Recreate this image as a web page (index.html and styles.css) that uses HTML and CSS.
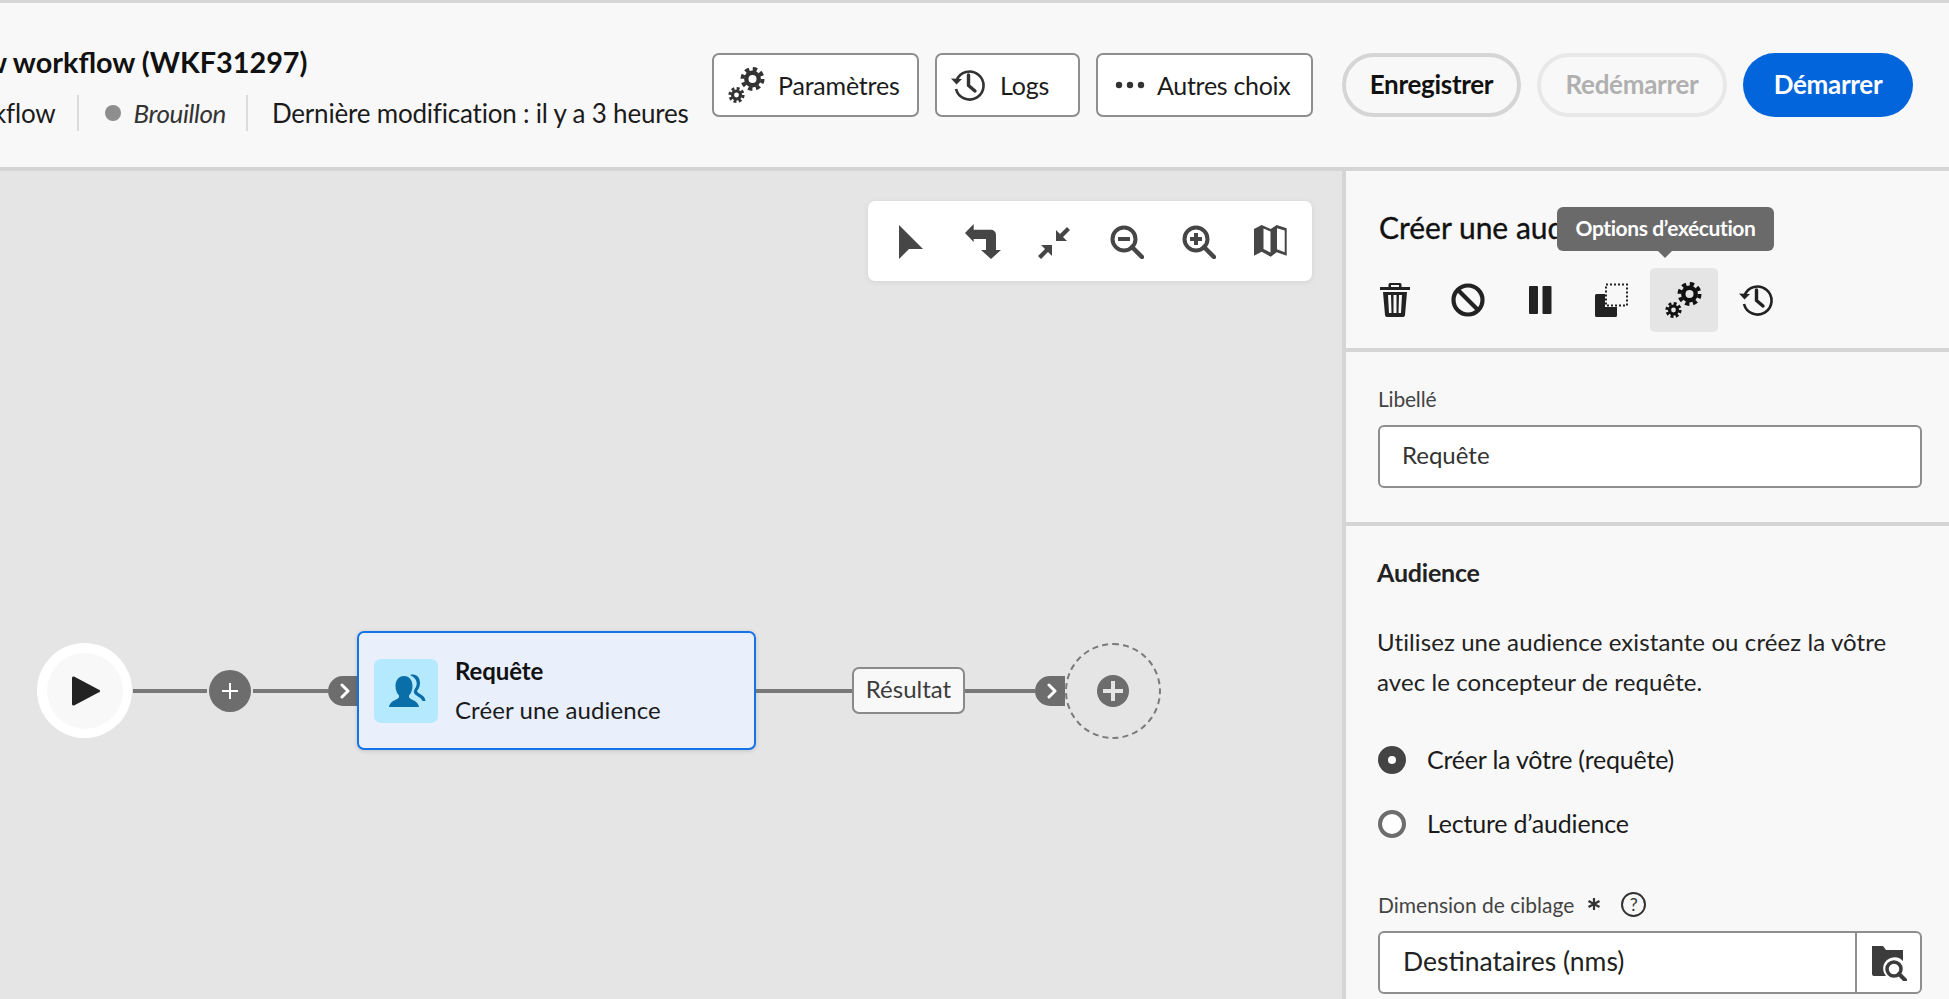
FILE: index.html
```html
<!DOCTYPE html>
<html lang="fr">
<head>
<meta charset="utf-8">
<title>Workflow</title>
<link rel="stylesheet" href="styles.css">
</head>
<body>
<header class="topbar">
  <div class="headings">
    <h1 class="wf-title">New workflow (WKF31297)</h1>
    <div class="wf-meta">
      <span class="meta-type">Workflow</span>
      <span class="meta-status"><i class="status-dot"></i><em>Brouillon</em></span>
      <span class="meta-date">Dernière modification : il y a 3 heures</span>
    </div>
  </div>
  <div class="actions">
    <button class="btn-outline btn-params">
      <svg class="ico-gears" width="38" height="38" viewBox="0 0 38 38"><use href="#gears"/></svg>
      Paramètres
    </button>
    <button class="btn-outline btn-logs">
      <svg width="36" height="36" viewBox="0 0 36 36"><use href="#history"/></svg>
      Logs
    </button>
    <button class="btn-outline btn-more">
      <svg width="32" height="8" viewBox="0 0 32 8"><circle cx="4" cy="4" r="3.2"/><circle cx="15" cy="4" r="3.2"/><circle cx="26" cy="4" r="3.2"/></svg>
      Autres choix
    </button>
    <button class="pill pill-save">Enregistrer</button>
    <button class="pill pill-restart">Redémarrer</button>
    <button class="pill pill-start">Démarrer</button>
  </div>
</header>

<svg class="defs" width="0" height="0">
  <defs>
    <g id="gears">
      <circle cx="24.5" cy="13" r="6.2" fill="none" stroke="currentColor" stroke-width="4.4"/>
      <circle cx="24.5" cy="13" r="10" fill="none" stroke="currentColor" stroke-width="4" stroke-dasharray="4.3 3.55"/>
      <circle cx="8.5" cy="29" r="4" fill="none" stroke="currentColor" stroke-width="3.2"/>
      <circle cx="8.5" cy="29" r="6.6" fill="none" stroke="currentColor" stroke-width="3" stroke-dasharray="2.9 2.28"/>
    </g>
    <g id="history">
      <path d="M6.5 13.5A14 14 0 1 1 6 22" fill="none" stroke="currentColor" stroke-width="2.6"/>
      <path d="M1 11.5l5.5 6 5.5-5.5z" fill="currentColor"/>
      <path d="M18.5 8v10.5l6.5 5.5" fill="none" stroke="currentColor" stroke-width="3.4" stroke-linecap="round" stroke-linejoin="round"/>
    </g>
  </defs>
</svg>

<main class="workspace">
  <section class="canvas">
    <div class="view-tools">
      <span class="tool"><svg width="26" height="36" viewBox="0 0 26 36"><path d="M1 1l24 24H11L1 35z"/></svg></span>
      <span class="tool"><svg width="36" height="36" viewBox="0 0 36 36"><path d="M0 9L8.7 0V5.7H26a5 5 0 0 1 5 5V26H36L26 35 16 26H21V15H8.7V18z"/></svg></span>
      <span class="tool"><svg width="34" height="34" viewBox="0 0 34 34"><path d="M29 2l3 3-7 7 4 4H18V5l4 4zM14 20V31l-4-4-7 7-3-3 7-7-4-4z"/></svg></span>
      <span class="tool"><svg width="34" height="34" viewBox="0 0 34 34"><circle cx="14" cy="14" r="11.5" fill="none" stroke="currentColor" stroke-width="4"/><path d="M22 22l10 10" stroke="currentColor" stroke-width="4.5" stroke-linecap="round"/><rect x="8" y="12" width="12" height="4"/></svg></span>
      <span class="tool"><svg width="34" height="34" viewBox="0 0 34 34"><circle cx="14" cy="14" r="11.5" fill="none" stroke="currentColor" stroke-width="4"/><path d="M22 22l10 10" stroke="currentColor" stroke-width="4.5" stroke-linecap="round"/><path d="M8 12h4V8h4v4h4v4h-4v4h-4v-4H8z"/></svg></span>
      <span class="tool"><svg width="34" height="34" viewBox="0 0 34 34"><path d="M0 4L7.7 0l9 4 6-4 10 3.3V30.7L22.7 27.3l-6 4.4-9-5L0 30.7zM9.5 3.5v20.500l7 3.500V6.500zM23 3.200v21l7.700 3V5.400z" fill-rule="evenodd"/></svg></span>
    </div>
    <div class="flow">
      <div class="start-node"><span class="start-inner"><svg width="28" height="30" viewBox="0 0 28 30"><path d="M2 0.5L26.5 13.5a1.5 1.5 0 0 1 0 3L2 29.5a1.5 1.5 0 0 1-2-1.5V2a1.5 1.5 0 0 1 2-1.5z"/></svg></span></div>
      <span class="link link-a"></span>
      <span class="plus-dot"><svg width="18" height="18" viewBox="0 0 18 18"><path d="M8 1h2v7h7v2h-7v7H8v-7H1V8h7z"/></svg></span>
      <span class="link link-b"></span>
      <span class="tab"><svg width="10" height="16" viewBox="0 0 10 16"><path d="M2 2l6 6-6 6" fill="none" stroke="currentColor" stroke-width="3" stroke-linecap="round" stroke-linejoin="round"/></svg></span>
      <article class="activity">
        <span class="activity-icon"><svg width="64" height="64" viewBox="0 0 64 64"><path d="M30 17c5.5 0 8.5 4.5 8.5 10 0 4-1.5 7.5-3.5 9.5v2c2 2.5 9 3 10 9.5H15c1-6.5 8-7 10-9.5v-2c-2-2-3.5-5.5-3.5-9.5 0-5.5 3-10 8.5-10z"/><path d="M36 16c1-.5 2-.5 3-.5 4.5 0 7 4 7 8.5 0 3.5-1.5 6.5-3 8 .5 3 8 3.5 8.500 10h-3c-1.5-4-7-5-8.500-8-.5-1.5 0-3 1-4.500 3-4 2.500-10-5-13.500z"/></svg></span>
        <div class="activity-text">
          <strong>Requête</strong>
          <span>Créer une audience</span>
        </div>
      </article>
      <span class="link link-c"></span>
      <span class="result">Résultat</span>
      <span class="link link-d"></span>
      <span class="tab tab-end"><svg width="10" height="16" viewBox="0 0 10 16"><path d="M2 2l6 6-6 6" fill="none" stroke="currentColor" stroke-width="3" stroke-linecap="round" stroke-linejoin="round"/></svg></span>
      <span class="drop"><span class="drop-plus"><svg width="22" height="22" viewBox="0 0 22 22"><path d="M9 1h4v8h8v4h-8v8H9v-8H1V9h8z"/></svg></span></span>
    </div>
  </section>

  <aside class="panel">
    <div class="panel-head">
      <h2 class="panel-title">Créer une audience</h2>
      <div class="icon-row">
        <button class="icon-btn icon-trash"><svg width="30" height="34" viewBox="0 0 30 34"><path d="M10 0h10a1.5 1.5 0 0 1 1.5 1.5V4H30v3H0V4h8.500V1.500A1.500 1.500 0 0 1 10 0zm1 2v2h8V2zM3 9h24l-2 23a2 2 0 0 1-2 2H7a2 2 0 0 1-2-2zm5 3l1 18h2.500L11 12zm5.500 0v18h3V12zm5.500 0l-.5 18H21l1-18z" fill-rule="evenodd"/></svg></button>
        <button class="icon-btn"><svg width="34" height="34" viewBox="0 0 34 34"><circle cx="17" cy="17" r="14.5" fill="none" stroke="currentColor" stroke-width="4.2"/><path d="M7 7l20 20" stroke="currentColor" stroke-width="4.2"/></svg></button>
        <button class="icon-btn"><svg width="24" height="30" viewBox="0 0 24 30"><rect x="1" y="1" width="9" height="28" rx="1"/><rect x="14.5" y="1" width="9" height="28" rx="1"/></svg></button>
        <button class="icon-btn"><svg width="34" height="34" viewBox="0 0 34 34"><path d="M0 12.500a1.500 1.500 0 0 1 1.500-1.500H10v13h12v8.500a1.500 1.500 0 0 1-1.500 1.500h-19A1.500 1.500 0 0 1 0 32.500z"/><rect x="11" y="1.500" width="21" height="21" fill="none" stroke="currentColor" stroke-width="2" stroke-dasharray="2 2"/></svg></button>
        <button class="icon-btn is-active"><svg width="38" height="38" viewBox="0 0 38 38"><use href="#gears"/></svg>
          <span class="tooltip">Options d’exécution</span>
        </button>
        <button class="icon-btn"><svg width="36" height="36" viewBox="0 0 36 36"><use href="#history"/></svg></button>
      </div>
    </div>
    <div class="panel-section section-label">
      <label class="field-label">Libellé</label>
      <div class="text-input">Requête</div>
    </div>
    <div class="panel-section section-audience">
      <h3 class="section-title">Audience</h3>
      <p class="section-copy">Utilisez une audience existante ou créez la vôtre<br>avec le concepteur de requête.</p>
      <div class="radio-row"><i class="radio is-on"></i><span>Créer la vôtre (requête)</span></div>
      <div class="radio-row"><i class="radio"></i><span>Lecture d’audience</span></div>
      <div class="dim-label">
        <span>Dimension de ciblage</span>
        <svg class="ico-star" width="14" height="14" viewBox="0 0 14 14"><path d="M7 1v12M1.500 4l11 6M12.500 4l-11 6" stroke="currentColor" stroke-width="2.200" fill="none"/></svg>
        <span class="help">?</span>
      </div>
      <div class="picker">
        <span class="picker-value">Destinataires (nms)</span>
        <span class="picker-btn"><svg width="36" height="36" viewBox="0 0 36 36"><path d="M1 1h11l3 4h17v11a11 11 0 0 0-17 15H3a2 2 0 0 1-2-2z"/><circle cx="23" cy="24" r="7" fill="none" stroke="currentColor" stroke-width="3.500"/><path d="M28 29l6 6" stroke="currentColor" stroke-width="4" stroke-linecap="round"/></svg></span>
      </div>
    </div>
  </aside>
</main>
</body>
</html>
```

FILE: styles.css
```css
* { box-sizing: border-box; }
html, body { margin: 0; padding: 0; }
body {
  width: 1949px;
  height: 999px;
  overflow: hidden;
  background: #e5e5e5;
  color: #1b1b1b;
  font-family: Lato, "Liberation Sans", sans-serif;
  font-size: 24px;
  display: flex;
  flex-direction: column;
}
.defs { position: absolute; }
button { font-family: inherit; cursor: pointer; }

/* top bar */
.topbar {
  flex: none;
  height: 171px;
  background: #f8f8f8;
  border-top: 3px solid #d5d5d5;
  border-bottom: 4px solid #d5d5d5;
  display: flex;
  align-items: flex-start;
  overflow: hidden;
}
.headings {
  flex: none;
  width: 745px;
  margin-left: -53px;
  padding-top: 40px;
}
.wf-title {
  margin: 0;
  font-size: 28.8px;
  font-weight: 700;
  line-height: 38px;
  color: #111;
  white-space: nowrap;
}
.wf-meta {
  display: flex;
  align-items: center;
  margin-top: 14px;
  height: 36px;
  font-size: 26px;
  letter-spacing: -0.2px;
}
.meta-type { margin-left: -3px; padding-right: 21px; border-right: 2px solid #dcdcdc; line-height: 36px; }
.meta-status {
  display: flex;
  align-items: center;
  padding: 0 20px 0 26px;
  border-right: 2px solid #dcdcdc;
  line-height: 36px;
  color: #333;
  letter-spacing: -0.4px;
}
.status-dot { width: 16px; height: 16px; border-radius: 50%; background: #8e8e8e; margin-right: 13px; }
.meta-date { padding-left: 24px; white-space: nowrap; }

.actions {
  flex: none;
  display: flex;
  align-items: center;
  margin-top: 50px;
  margin-left: 20px;
}
.btn-outline {
  height: 64px;
  display: flex;
  align-items: center;
  background: #fff;
  border: 2px solid #8e8e8e;
  border-radius: 7px;
  color: #1b1b1b;
  font-size: 25px;
  letter-spacing: -0.2px;
  padding: 0;
  white-space: nowrap;
}
.btn-params { width: 207px; padding-left: 14px; gap: 12px; margin-right: 16px; }
.btn-logs { width: 145px; padding-left: 13px; gap: 14px; margin-right: 16px; }
.btn-more { width: 217px; padding-left: 17px; gap: 10px; margin-right: 29px; letter-spacing: -0.3px; }
.btn-outline svg { fill: #333; color: #333; flex: none; }
.pill {
  height: 64px;
  border-radius: 32px;
  font-size: 26px;
  font-weight: 700;
  letter-spacing: -0.3px;
  padding: 0 0 3px;
  margin-right: 16px;
  background: transparent;
}
.pill-save { width: 179px; border: 4px solid #d5d5d5; color: #111; }
.pill-restart { width: 190px; border: 4px solid #e8e8e8; color: #b0b0b0; }
.pill-start { width: 170px; border: 0; background: #0265dc; color: #fff; }

/* workspace */
.workspace { flex: 1; display: flex; min-height: 0; }
.canvas {
  flex: none;
  width: 1342px;
  display: flex;
  flex-direction: column;
  background: #e5e5e5;
}
.view-tools {
  align-self: flex-end;
  margin: 30px 30px 0 0;
  width: 444px;
  height: 80px;
  padding: 2px 5px 0 7px;
  display: grid;
  grid-template-columns: repeat(6, 72px);
  align-items: center;
  justify-items: center;
  background: #fff;
  border-radius: 7px;
  box-shadow: 0 1px 6px rgba(0, 0, 0, 0.08);
  color: #464646;
  fill: #464646;
}
.tool { display: flex; }

.flow {
  margin-top: 350px;
  padding-left: 37px;
  display: flex;
  align-items: center;
}
.start-node {
  flex: none;
  width: 95px;
  height: 95px;
  border-radius: 50%;
  background: #fff;
  display: flex;
  align-items: center;
  justify-content: center;
}
.start-inner {
  width: 76px;
  height: 76px;
  border-radius: 50%;
  background: #f8f8f8;
  display: flex;
  align-items: center;
  justify-content: center;
  padding-left: 3px;
  fill: #222;
}
.link { flex: none; height: 4px; background: #787878; }
.link-a { width: 74px; margin-left: 1px; }
.plus-dot {
  flex: none;
  width: 42px;
  height: 42px;
  margin: 0 2px;
  border-radius: 50%;
  background: #6d6d6d;
  display: flex;
  align-items: center;
  justify-content: center;
  fill: #fff;
}
.link-b { width: 75px; }
.tab {
  flex: none;
  width: 29px;
  height: 30px;
  border-radius: 15px 0 0 15px;
  background: #6d6d6d;
  color: #fff;
  display: flex;
  align-items: center;
  justify-content: center;
  padding-left: 4px;
}
.activity {
  flex: none;
  width: 399px;
  height: 119px;
  display: flex;
  align-items: center;
  gap: 17px;
  padding-left: 15px;
  background: #e9f0fc;
  border: 2px solid #1473e6;
  border-radius: 7px;
  box-shadow: 0 1px 4px rgba(0, 0, 0, 0.15);
}
.activity-icon {
  flex: none;
  width: 64px;
  height: 64px;
  border-radius: 7px;
  background: #b5e9fd;
  display: flex;
  align-items: center;
  justify-content: center;
  fill: #0a6ea8;
}
.activity-text { display: flex; flex-direction: column; gap: 9px; line-height: 30px; letter-spacing: 0.1px; white-space: nowrap; }
.activity-text strong { font-weight: 700; color: #111; letter-spacing: -0.1px; }
.link-c { width: 96px; }
.result {
  flex: none;
  width: 113px;
  height: 47px;
  padding-bottom: 4px;
  display: flex;
  align-items: center;
  justify-content: center;
  background: #f8f8f8;
  border: 2px solid #8a8a8a;
  border-radius: 7px;
  color: #3c3c3c;
}
.link-d { width: 70px; }
.tab-end { width: 30px; }
.drop {
  flex: none;
  width: 96px;
  height: 96px;
  border-radius: 50%;
  border: 2px dashed #7a7a7a;
  display: flex;
  align-items: center;
  justify-content: center;
}
.drop-plus {
  width: 32px;
  height: 32px;
  border-radius: 50%;
  background: #6d6d6d;
  display: flex;
  align-items: center;
  justify-content: center;
  fill: #e5e5e5;
}

/* right panel */
.panel {
  flex: 1;
  min-width: 0;
  background: #f8f8f8;
  border-left: 4px solid #d5d5d5;
  display: flex;
  flex-direction: column;
}
.panel-head {
  flex: none;
  height: 181px;
  border-bottom: 4px solid #d5d5d5;
  padding: 37px 0 0 16px;
}
.panel-title {
  margin: 0 0 0 17px;
  font-size: 30px;
  font-weight: 400;
  line-height: 38px;
  color: #111;
  white-space: nowrap;
  -webkit-text-stroke: 0.35px #111;
}
.icon-row { display: flex; gap: 4px; margin-top: 22px; }
.icon-btn {
  position: relative;
  width: 68px;
  height: 64px;
  padding: 0;
  border: 0;
  border-radius: 5px;
  background: transparent;
  display: flex;
  align-items: center;
  justify-content: center;
  color: #222;
  fill: #222;
}
.icon-trash { padding-right: 2px; }
.icon-btn.is-active { background: #e5e5e5; color: #111; fill: #111; }
.tooltip {
  position: absolute;
  left: -93px;
  top: -61px;
  width: 217px;
  height: 44px;
  border-radius: 6px;
  background: #6a6a6a;
  color: #fff;
  font-size: 21px;
  font-weight: 700;
  letter-spacing: -0.4px;
  line-height: 42px;
  text-align: center;
  white-space: nowrap;
}
.tooltip::after {
  content: "";
  position: absolute;
  left: 100px;
  bottom: -7px;
  border: 8px solid transparent;
  border-bottom: 0;
  border-top-color: #6a6a6a;
}
.panel-section { flex: none; padding-left: 32px; }
.section-label { height: 174px; border-bottom: 4px solid #d5d5d5; padding-top: 32px; }
.field-label { display: block; font-size: 21px; line-height: 30px; color: #444; letter-spacing: -0.2px; }
.text-input {
  margin-top: 11px;
  width: 544px;
  height: 63px;
  background: #fff;
  border: 2px solid #8e8e8e;
  border-radius: 6px;
  padding-left: 22px;
  line-height: 56px;
  color: #333;
}
.section-audience { padding-top: 29px; }
.section-title { margin: 0 0 0 -1px; font-size: 25px; font-weight: 700; line-height: 34px; letter-spacing: -0.2px; color: #222; }
.section-copy { margin: 33px 0 0 -1px; line-height: 40px; letter-spacing: 0.1px; color: #222; }
.radio-row { display: flex; align-items: center; gap: 21px; height: 28px; margin-top: 36px; font-size: 25px; letter-spacing: -0.2px; }
.radio-row span { padding-bottom: 2px; }
.section-copy + .radio-row { margin-top: 44px; }
.radio {
  flex: none;
  width: 28px;
  height: 28px;
  border-radius: 50%;
  border: 4px solid #6d6d6d;
  background: #fff;
}
.radio.is-on { border: 10px solid #444; }
.dim-label {
  display: flex;
  align-items: center;
  margin-top: 51px;
  height: 30px;
  font-size: 21px;
  color: #444;
}
.ico-star { margin-left: 13px; color: #333; }
.help {
  width: 25px;
  height: 25px;
  margin-left: 20px;
  border: 2px solid #333;
  border-radius: 50%;
  text-align: center;
  font-size: 18px;
  line-height: 21px;
  color: #333;
}
.picker {
  margin-top: 12px;
  width: 544px;
  height: 63px;
  display: flex;
  background: #fff;
  border: 2px solid #8e8e8e;
  border-radius: 6px;
}
.picker-value { flex: 1; padding-left: 23px; font-size: 26.5px; line-height: 56px; color: #222; }
.picker-btn {
  flex: none;
  width: 65px;
  border-left: 2px solid #8e8e8e;
  display: flex;
  align-items: center;
  justify-content: center;
  fill: #3c3c3c;
  color: #3c3c3c;
}
```
